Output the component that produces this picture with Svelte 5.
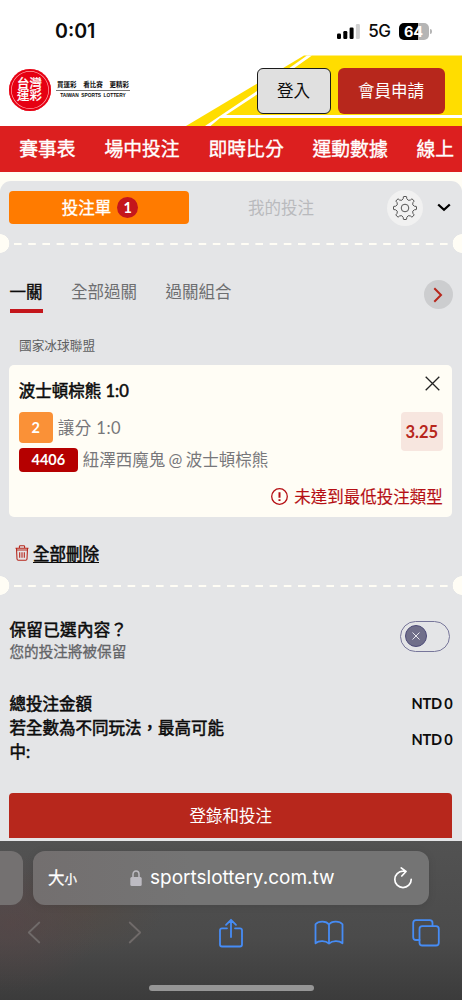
<script lang="ts">
	type Tab = 'single' | 'all' | 'combo'

	const navItems = ['賽事表', '場中投注', '即時比分', '運動數據', '線上']
	const betTabs: { id: Tab; label: string }[] = [
		{ id: 'single', label: '一關' },
		{ id: 'all', label: '全部過關' },
		{ id: 'combo', label: '過關組合' }
	]
	const totals = [
		{ label: '總投注金額', value: 'NTD 0' },
		{ label: '若全數為不同玩法，最高可能中:', value: 'NTD 0' }
	]

	let activeTab = $state<Tab>('single')
	let keepSelection = $state(false)

	// eight-toothed outline for the settings button
	const gearPath =
		Array.from({ length: 8 }, (_, i) => {
			const point = (deg: number, r: number) => {
				const a = ((i * 45 + deg - 90) * Math.PI) / 180
				return `${(12 + r * Math.cos(a)).toFixed(2)} ${(12 + r * Math.sin(a)).toFixed(2)}`
			}
			return `${i === 0 ? 'M' : 'L'}${point(-8, 11.4)}Q${point(0, 11.9)} ${point(8, 11.4)}L${point(11, 9.5)}Q${point(22.5, 7.4)} ${point(34, 9.5)}`
		}).join('') + 'Z'
</script>

<div class="screen">
	<div class="status">
		<span class="clock">0:01</span>
		<div class="indicators">
			<svg class="signal" viewBox="0 0 23 15">
				<rect x="0" y="9.5" width="4" height="5.5" rx="1.2" />
				<rect x="6.3" y="7" width="4" height="8" rx="1.2" />
				<rect x="12.6" y="3.5" width="4" height="11.5" rx="1.2" />
				<rect x="18.9" y="0" width="4" height="15" rx="1.2" fill="#d0d0d0" />
			</svg>
			<span class="network">5G</span>
			<span class="battery">64</span>
			<span class="battery-cap"></span>
		</div>
	</div>

	<header>
		<svg class="banner" viewBox="0 0 462 71">
			<path d="M186 71L304 .6H462V71Z" fill="#ffdd00" />
			<path d="M205 71L257 36 307 .6H312L257 39.5 226 60H462V63H220L210.5 71Z" fill="#fff" />
		</svg>
		<div class="logo">
			<div class="seal"><span>台灣運彩</span></div>
			<div class="slogan">
				<div class="zh"><span>買運彩</span><span>看比賽</span><span>更精彩</span></div>
				<div class="en">TAIWAN SPORTS LOTTERY</div>
			</div>
		</div>
		<div class="account">
			<button class="login">登入</button>
			<button class="register">會員申請</button>
		</div>
	</header>

	<nav>
		{#each navItems as item (item)}
			<span>{item}</span>
		{/each}
	</nav>

	<main>
		<div class="slip-head">
			<button class="slip-tab active"><span>投注單</span> <span class="count">1</span></button>
			<button class="slip-tab">我的投注</button>
			<button class="settings" aria-label="設定">
				<svg viewBox="0 0 24 24"><path d={gearPath} /><circle cx="12" cy="12" r="3.8" /></svg>
			</button>
			<svg class="collapse" viewBox="0 0 14 9"><path d="M1.2 1.5L7 6.8 12.8 1.5" /></svg>
		</div>

		<div class="tear">
			<svg viewBox="0 0 434 2"><line x1="0" y1="1" x2="434" y2="1" /></svg>
		</div>

		<div class="bet-tabs">
			{#each betTabs as tab (tab.id)}
				<button class:active={activeTab === tab.id} onclick={() => (activeTab = tab.id)}>{tab.label}</button>
			{/each}
			<span class="next">
				<svg viewBox="0 0 10 16"><path d="M1.3 1.3L8 8 1.3 14.7" /></svg>
			</span>
		</div>

		<div class="league">國家冰球聯盟</div>

		<section class="bet">
			<div class="bet-info">
				<h2>波士頓棕熊 1:0</h2>
				<div class="row market"><span class="pick">2</span>讓分 1:0</div>
				<div class="row event"><span class="code">4406</span>紐澤西魔鬼 @ 波士頓棕熊</div>
			</div>
			<div class="bet-side">
				<svg class="close" viewBox="0 0 15 15"><path d="M.7 .7L14.3 14.3M14.3 .7L.7 14.3" /></svg>
				<span class="odds">3.25</span>
			</div>
			<div class="warning">
				<svg viewBox="0 0 17 17">
					<circle cx="8.5" cy="8.5" r="7.8" />
					<path d="M8.5 4.2V9.8M8.5 11.2V13" />
				</svg>
				未達到最低投注類型
			</div>
		</section>

		<div class="clear">
			<svg viewBox="0 0 14 16">
				<path d="M.5 3.3H13.5M4.4 3V1.6Q4.4 .7 5.3 .7H8.7Q9.6 .7 9.6 1.6V3M1.5 3.5L2 14Q2.1 15.3 3.3 15.3H10.7Q11.9 15.3 12 14L12.5 3.5M1.6 5H12.4M4.7 7.2V12.8M7 7.2V12.8M9.3 7.2V12.8" />
			</svg>
			<span>全部刪除</span>
		</div>

		<div class="tear second">
			<svg viewBox="0 0 434 2"><line x1="0" y1="1" x2="434" y2="1" /></svg>
		</div>

		<div class="keep">
			<div class="keep-text">
				<div class="keep-title">保留已選內容？</div>
				<div class="keep-note">您的投注將被保留</div>
			</div>
			<button class="toggle" class:on={keepSelection} aria-label="保留已選內容" onclick={() => (keepSelection = !keepSelection)}>
				<span class="knob">
					<svg viewBox="0 0 8 8"><path d="M.5 .5L7.5 7.5M7.5 .5L.5 7.5" /></svg>
				</span>
			</button>
		</div>

		<div class="totals">
			{#each totals as total (total.label)}
				<div class="total">
					<span class="label">{total.label}</span>
					<span class="value">{total.value}</span>
				</div>
			{/each}
		</div>

		<button class="submit">登錄和投注</button>
	</main>

	<footer>
		<div class="address-row">
			<div class="previous-page"></div>
			<div class="address">
				<span class="text-size">大<small>小</small></span>
				<svg class="lock" viewBox="0 0 12 16">
					<path d="M3 8V4.4A3 3.4 0 0 1 9 4.4V8" fill="none" stroke="#bdbbc2" stroke-width="1.5" />
					<rect x=".3" y="7" width="11.4" height="9" rx="1.5" fill="#bdbbc2" />
				</svg>
				<span class="url">sportslottery.com.tw</span>
				<svg class="reload" viewBox="0 0 20 22">
					<path d="M10 4.2A8.2 8.2 0 1 0 18.2 12.4M8.2 .9L13 4.5 8.8 9M10 4.2H12.5" />
				</svg>
			</div>
		</div>
		<div class="toolbar">
			<svg class="off" width="14" height="23" viewBox="0 0 14 23"><path d="M12.3 1.5L1.8 11.5 12.3 21.5" /></svg>
			<svg class="off" width="14" height="23" viewBox="0 0 14 23"><path d="M1.7 1.5L12.2 11.5 1.7 21.5" /></svg>
			<svg width="26" height="30" viewBox="0 0 26 30">
				<path d="M9 10.3H4Q2 10.3 2 12.3V26.5Q2 28.5 4 28.5H22Q24 28.5 24 26.5V12.3Q24 10.3 22 10.3H17M13 19V2M8 6.8L13 1.8 18 6.8" />
			</svg>
			<svg width="30" height="26" viewBox="0 0 30 26">
				<path d="M15 4.5C12.5 .8 4.5 .6 1.5 4.3V23.3C5 20.4 11.5 20.6 15 23.5 18.5 20.6 25 20.4 28.5 23.3V4.3C25.5 .6 17.5 .8 15 4.5ZV23.5" />
			</svg>
			<svg width="28" height="28" viewBox="0 0 28 28">
				<path d="M7.5 21H4Q1.2 21 1.2 18.2V4Q1.2 1.2 4 1.2H17.7Q20.5 1.2 20.5 4V7.2" />
				<rect x="7.5" y="7.2" width="19.3" height="19.3" rx="2.8" />
			</svg>
		</div>
		<div class="home-bar"></div>
	</footer>
</div>

<style>
	:global(body) {
		margin: 0;
	}

	.screen {
		display: flex;
		flex-direction: column;
		width: 462px;
		height: 1000px;
		overflow: hidden;
		background: #fffdf5;
		color: #0c0c0c;
		font-family: Lato, 'Noto Sans CJK TC', sans-serif;
		font-size: 16.5px;
	}

	.screen * {
		box-sizing: border-box;
	}

	svg {
		display: block;
		flex: none;
		fill: none;
	}

	button {
		border: none;
		background: none;
		padding: 0;
		font: inherit;
		color: inherit;
		white-space: nowrap;
	}

	.status {
		display: flex;
		justify-content: space-between;
		align-items: center;
		height: 55px;
		padding: 7px 30.5px 0 55px;
		background: #fff;
		font-family: Inter, sans-serif;
		flex: none;
	}

	.clock {
		font-size: 19.6px;
		font-weight: 600;
	}

	.indicators {
		display: flex;
		align-items: center;
	}

	.signal {
		width: 23px;
		height: 15px;
		fill: #000;
	}

	.network {
		margin-left: 8px;
		font-size: 17px;
		font-weight: 500;
		letter-spacing: -0.5px;
	}

	.battery {
		width: 30px;
		height: 17px;
		margin-left: 8px;
		border-radius: 5px;
		background: linear-gradient(90deg, #000 64%, #b5b5b5 64%);
		color: #fff;
		font-size: 14.5px;
		font-weight: 700;
		line-height: 17px;
		text-align: center;
	}

	.battery-cap {
		width: 2px;
		height: 5px;
		margin-left: 1px;
		border-radius: 0 2px 2px 0;
		background: #b5b5b5;
	}

	header {
		position: relative;
		display: flex;
		justify-content: space-between;
		height: 71px;
		padding: 13px 17.5px 12px 9px;
		background: #fff;
		flex: none;
	}

	.banner {
		position: absolute;
		inset: 0;
		width: 462px;
		height: 71px;
	}

	.logo,
	.account {
		position: relative;
		display: flex;
	}

	.seal {
		display: flex;
		flex-direction: column;
		justify-content: center;
		align-items: center;
		width: 42px;
		height: 42px;
		margin-top: 1px;
		border-radius: 50%;
		background: #e60012;
		box-shadow: inset 0 0 0 2px #e60012, inset 0 0 0 2.7px #ffa5ac;
		color: #fff;
		font-size: 12.4px;
		font-weight: 500;
		line-height: 12.4px;
	}

	.seal span {
		width: 26px;
		-webkit-text-stroke: 0.2px;
	}

	.slogan {
		width: 74px;
		margin: 13px 0 0 5px;
	}

	.zh {
		display: flex;
		justify-content: space-between;
		height: 10px;
		padding: 0 1px;
		border-bottom: 1px solid #777;
		width: 74px;
		font-size: 6.5px;
		font-weight: 700;
		line-height: 7px;
	}

	.en {
		margin-top: 2px;
		font-family: 'Liberation Sans', sans-serif;
		font-size: 4.8px;
		font-weight: 700;
		line-height: 6px;
		text-align: center;
		white-space: nowrap;
		word-spacing: 1.2px;
	}

	.account {
		gap: 7px;
	}

	.account button {
		height: 46px;
		padding-bottom: 2px;
		border-radius: 6px;
	}

	.login {
		width: 74px;
		border: 1px solid #1b1b1b;
		background: #e0e0e0;
	}

	.register {
		width: 107px;
		background: #b7271c;
		color: #fff;
	}

	nav {
		display: flex;
		align-items: center;
		gap: 28.9px;
		height: 46px;
		padding: 0 0 3px 19.3px;
		background: #dc1f1f;
		color: #fff;
		font-size: 18.8px;
		white-space: nowrap;
		-webkit-text-stroke: 0.35px;
		flex: none;
	}

	main {
		display: flex;
		flex-direction: column;
		height: 659.5px;
		margin-top: 9px;
		border-radius: 11px 11px 0 0;
		background: #e4e5e7;
		flex: none;
	}

	.slip-head {
		display: flex;
		align-items: center;
		height: 53px;
		padding: 0 11px 0 9px;
		flex: none;
	}

	.slip-tab {
		width: 180px;
		height: 33px;
		margin-right: 3px;
		padding: 0 0 2px 4px;
		color: #b9babd;
	}

	.slip-tab.active {
		display: flex;
		justify-content: center;
		align-items: center;
		gap: 6px;
		margin-right: 0;
		padding: 0 0 0 2px;
		border-radius: 4px;
		background: #ff7b00;
		color: #fff;
	}

	.slip-tab.active span:first-child {
		padding-bottom: 2px;
		-webkit-text-stroke: 0.3px;
	}

	.count {
		width: 21px;
		height: 21px;
		border-radius: 50%;
		background: #c4161c;
		font-size: 14.5px;
		font-weight: 700;
		line-height: 21px;
		text-align: center;
	}

	.settings {
		display: grid;
		place-items: center;
		width: 36px;
		height: 36px;
		margin-left: 15px;
		border-radius: 50%;
		background: #f1f1f1;
		flex: none;
	}

	.settings svg {
		width: 24px;
		height: 24px;
		stroke: #555;
		stroke-width: 1;
		stroke-linejoin: round;
	}

	.collapse {
		width: 14px;
		height: 9px;
		margin-left: 14px;
		stroke: #000;
		stroke-width: 2.3;
	}

	/* perforated ticket edge with a notch on each side */
	.tear {
		display: flex;
		align-items: center;
		height: 19px;
		padding: 1px 14px 0;
		background:
			radial-gradient(circle at 0 50%, #fffdf5 9px, transparent 9.6px),
			radial-gradient(circle at 100% 50%, #fffdf5 9px, transparent 9.6px);
		flex: none;
	}

	.tear svg {
		width: 434px;
		height: 2px;
		stroke: #fffdf5;
		stroke-width: 2;
		stroke-dasharray: 7.6 6.6;
	}

	.bet-tabs {
		display: flex;
		align-items: flex-start;
		gap: 28.5px;
		height: 60px;
		margin-top: 27px;
		padding: 0 9.5px 0 9.5px;
		color: #6d6e70;
		flex: none;
	}

	.bet-tabs button {
		height: 33px;
		padding-bottom: 4px;
		line-height: 25px;
		border-bottom: 4px solid transparent;
	}

	.bet-tabs .active {
		border-color: #c4161c;
		color: #0c0c0c;
		-webkit-text-stroke: 0.4px;
	}

	.next {
		display: grid;
		place-items: center;
		width: 29px;
		height: 29px;
		margin-left: auto;
		border-radius: 50%;
		background: #cccdcf;
	}

	.next svg {
		width: 10px;
		height: 16px;
		stroke: #b7271c;
		stroke-width: 2;
	}

	.league {
		height: 24px;
		padding-left: 19px;
		color: #5e5f61;
		font-size: 12.7px;
		line-height: 10px;
		flex: none;
	}

	.bet {
		display: grid;
		grid-template-columns: 1fr auto;
		height: 152px;
		margin: 1px 9.7px 0 9.3px;
		padding: 11px 9.5px 10px;
		border-radius: 5px;
		background: #fffdf5;
		flex: none;
	}

	h2 {
		margin: 0 0 5px;
		font-size: 16.5px;
		font-weight: 400;
		line-height: 31px;
		-webkit-text-stroke: 0.55px;
	}

	.row {
		display: flex;
		align-items: center;
		gap: 5px;
		color: #77777a;
		line-height: 22px;
	}

	.row span {
		border-radius: 4px;
		color: #fff;
		font-size: 14.5px;
		font-weight: 700;
		letter-spacing: 0;
		text-align: center;
	}

	.market {
		letter-spacing: 0.45px;
	}

	.event {
		margin-top: 5px;
		word-spacing: -0.9px;
	}

	.row .pick {
		width: 34px;
		height: 31px;
		background: #fa9137;
		line-height: 32px;
	}

	.row .code {
		width: 59px;
		height: 24px;
		background: #b50000;
		line-height: 24px;
	}

	.bet-side {
		display: flex;
		flex-direction: column;
		align-items: flex-end;
		gap: 21px;
	}

	.close {
		width: 15px;
		height: 15px;
		margin-right: 2.5px;
		stroke: #222;
		stroke-width: 1.3;
	}

	.odds {
		width: 42px;
		height: 39px;
		border-radius: 4px;
		background: #f7e6df;
		color: #b7271c;
		font-size: 16.5px;
		font-weight: 700;
		line-height: 40px;
		text-align: center;
	}

	.warning {
		display: flex;
		grid-column: 1 / -1;
		justify-content: flex-end;
		align-items: center;
		align-self: end;
		gap: 6px;
		height: 22px;
		color: #b50f14;
		-webkit-text-stroke: 0.15px;
	}

	.warning svg {
		width: 17px;
		height: 17px;
		stroke: #b50f14;
		stroke-width: 1.3;
	}

	.warning path {
		stroke-width: 2;
	}

	.clear {
		display: flex;
		align-items: center;
		gap: 4px;
		height: 24px;
		margin-top: 24px;
		padding-left: 15px;
		-webkit-text-stroke: 0.55px;
		flex: none;
	}

	.clear span {
		text-decoration: underline;
		text-decoration-thickness: 1px;
		text-underline-offset: 2px;
	}

	.clear svg {
		width: 14px;
		height: 16px;
		stroke: #b7271c;
		stroke-width: 1.1;
	}

	.second {
		margin-top: 10.5px;
	}

	.keep {
		display: flex;
		justify-content: space-between;
		align-items: center;
		height: 47px;
		margin-top: 18px;
		padding: 0 12px 0 9.5px;
		flex: none;
	}

	.keep-text {
		padding-top: 8px;
	}

	.keep-title {
		line-height: 24px;
		letter-spacing: 0.35px;
		-webkit-text-stroke: 0.55px;
	}

	.keep-note {
		color: #636467;
		font-size: 14.6px;
		line-height: 20px;
		-webkit-text-stroke: 0.3px;
	}

	.toggle {
		display: flex;
		align-items: center;
		width: 50px;
		height: 31px;
		padding: 0 4px;
		border: 1px solid #77769a;
		border-radius: 16px;
	}

	.toggle.on {
		justify-content: flex-end;
	}

	.knob {
		display: grid;
		place-items: center;
		width: 22px;
		height: 22px;
		border: 1px solid #4d4b78;
		border-radius: 50%;
		background: #706f8a;
	}

	.knob svg {
		width: 8px;
		height: 8px;
		stroke: #e8e8ee;
	}

	.totals {
		margin-top: 32.5px;
		padding: 0 9.5px;
		line-height: 24px;
		flex: none;
	}

	.total {
		display: flex;
		justify-content: space-between;
		align-items: center;
	}

	.label {
		width: 222px;
		-webkit-text-stroke: 0.55px;
	}

	.value {
		font-size: 14.6px;
		font-weight: 700;
		letter-spacing: -0.2px;
		word-spacing: -1px;
	}

	.submit {
		height: 45px;
		margin: auto 9.7px 3px 9.3px;
		border-radius: 4px 4px 0 0;
		background: #b7271c;
		color: #fff;
		flex: none;
	}

	footer {
		display: flex;
		flex-direction: column;
		height: 160px;
		padding-top: 10px;
		background:
			radial-gradient(ellipse 90px 70px at 10px 82px, #5c434480, transparent),
			radial-gradient(ellipse 80px 50px at 85px 65px, #57473d70, transparent),
			linear-gradient(#525252, #4b4b4b 60%, #3b3b3b);
		flex: none;
	}

	.address-row {
		display: flex;
		gap: 10px;
		height: 54px;
	}

	.previous-page {
		width: 23px;
		border-radius: 0 12px 12px 0;
		background: #747171;
	}

	.address {
		display: flex;
		align-items: center;
		width: 396px;
		padding: 0 16px 0 15px;
		border-radius: 12px;
		background: linear-gradient(90deg, #736f6f, #747474 40%);
		box-shadow: 0 1px 8px #00000018;
		color: #fff;
		font-family: Inter, 'Noto Sans CJK TC', sans-serif;
	}

	.text-size {
		width: 82px;
		padding-bottom: 2px;
		font-size: 16.5px;
		-webkit-text-stroke: 0.3px;
	}

	.text-size small {
		font-size: 12.5px;
	}

	.lock {
		width: 12px;
		height: 16px;
	}

	.url {
		margin-left: 8px;
		font-size: 19px;
	}

	.reload {
		width: 20px;
		height: 22px;
		margin-left: auto;
		stroke: #fff;
		stroke-width: 1.7;
		stroke-linecap: round;
		stroke-linejoin: round;
	}

	.toolbar {
		display: grid;
		grid-template-columns: 101px 90px 95.5px 98.5px 28px;
		align-items: center;
		height: 58px;
		padding: 0 0 2px 27px;
	}

	.toolbar svg {
		stroke: #468cf5;
		stroke-width: 1.8;
		stroke-linecap: round;
		stroke-linejoin: round;
	}

	.toolbar .off {
		stroke: #706b6a;
	}

	.home-bar {
		width: 165px;
		height: 6px;
		margin: 22px auto 0;
		border-radius: 3px;
		background: #969696;
	}
</style>
